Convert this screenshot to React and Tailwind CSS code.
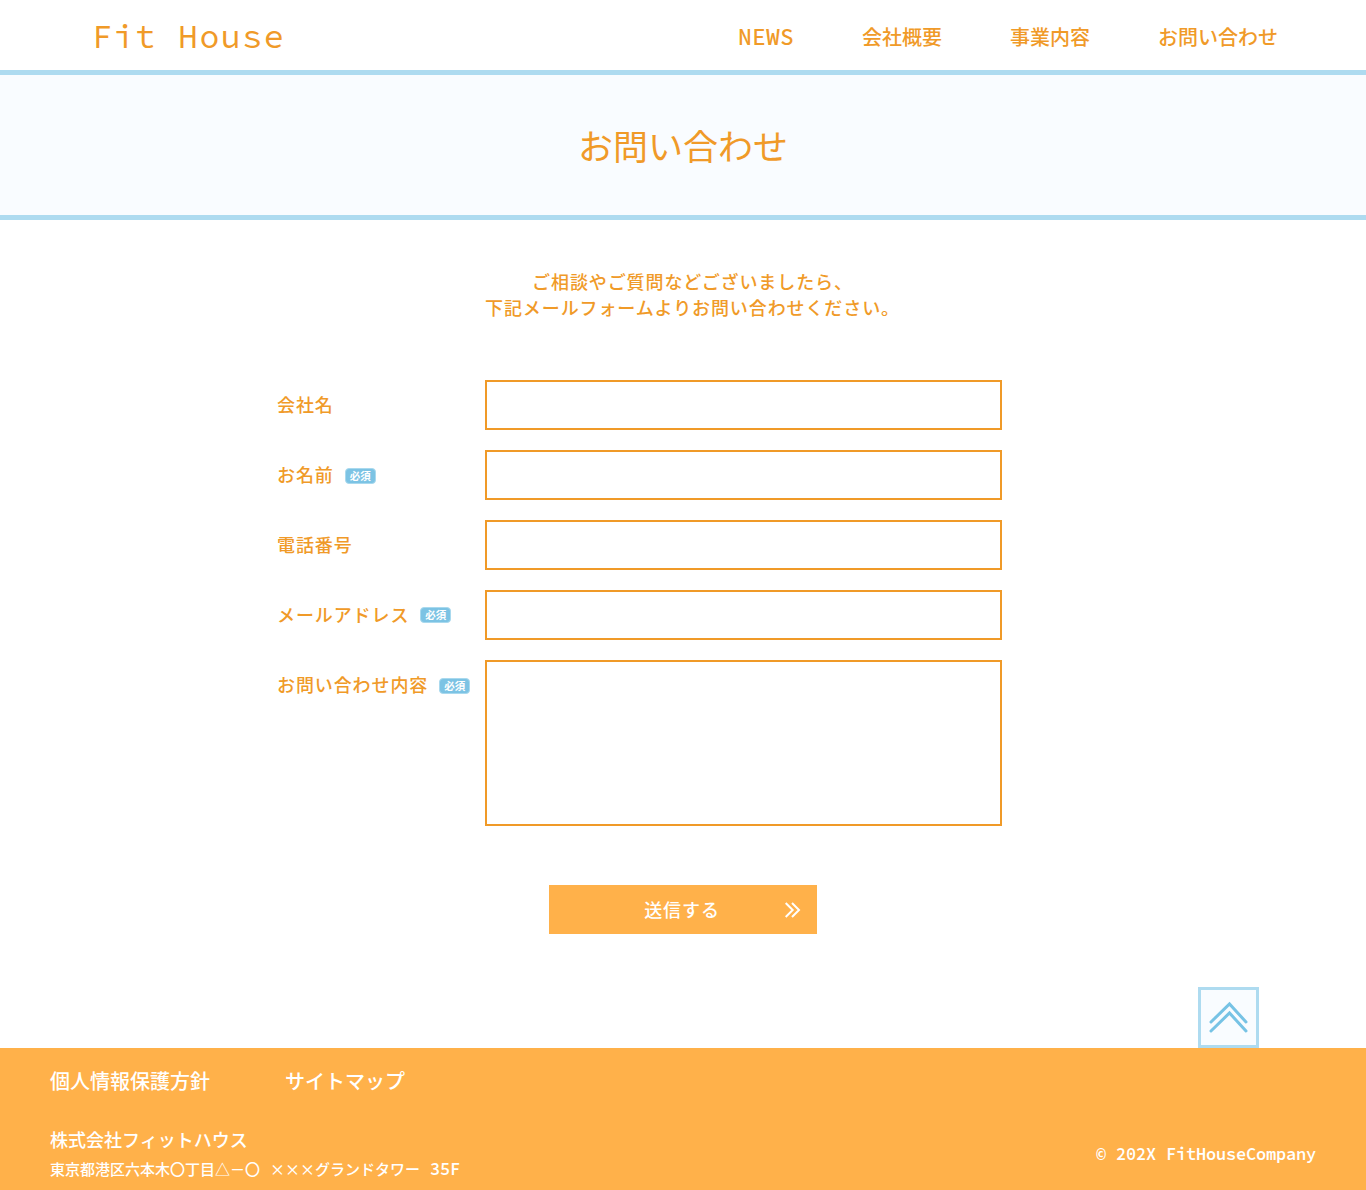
const labels = [
  { text: '会社名' },
  { text: 'お名前', required: true, badge: 'mt-[3px]' },
  { text: '電話番号' },
  { text: 'メールアドレス', required: true, badge: 'mt-px' },
  { text: 'お問い合わせ内容', required: true, badge: 'mt-[3px]', area: true },
];

function Badge({ className }) {
  return (
    <span className={`ml-[11px] flex h-4 w-[31px] items-center justify-center rounded-[4px] border border-[#a9d9ee] bg-[#7cc3e4] pt-[2px] text-[10.5px] leading-none font-bold tracking-normal text-white ${className}`}>
      必須
    </span>
  );
}

export default function App() {
  return (
    <div className="flex h-[1190px] w-full flex-col bg-white font-['Noto_Sans_CJK_JP',sans-serif] font-medium text-[#f09a28]">
      <header className="flex h-[75px] shrink-0 items-center justify-between border-b-[5px] border-[#aedbf0] pr-[88px] pl-[92px]">
        <a className="mt-[4px] font-['Source_Code_Pro','DejaVu_Sans_Mono',monospace] text-[33.3px] leading-none font-normal tracking-[1.5px] whitespace-pre">Fit House</a>
        <nav className="flex items-center gap-[68px] pt-[3px] text-[20px] leading-[30px]">
          <a className="font-['Source_Code_Pro','DejaVu_Sans_Mono',monospace] text-[23px] tracking-[0.2px]">NEWS</a>
          <a>会社概要</a>
          <a>事業内容</a>
          <a>お問い合わせ</a>
        </nav>
      </header>
      <section className="flex h-[145px] shrink-0 items-center justify-center border-b-[5px] border-[#aedbf0] bg-[#f9fcff]">
        <h1 className="pb-[2px] text-[35px] leading-none font-normal">お問い合わせ</h1>
      </section>
      <main className="flex flex-1 flex-col">
        <p className="mt-[48px] w-full pl-[19px] text-center text-[18px] leading-[26px] tracking-[0.9px]">
          ご相談やご質問などございましたら、<br />下記メールフォームよりお問い合わせください。
        </p>
        <form className="mt-[60px] ml-[277px] flex w-[725px] flex-col gap-5">
          {labels.map((f) => (
            <div key={f.text} className="flex">
              <label className="flex h-[50px] w-[208px] items-center pb-[2px] text-[18px] tracking-[0.9px] whitespace-nowrap">
                {f.text}
                {f.required && <Badge className={f.badge} />}
              </label>
              {f.area ? (
                <textarea className="h-[166px] w-[517px] resize-none border-2 border-[#f09a28] bg-white" />
              ) : (
                <input className="h-[50px] w-[517px] border-2 border-[#f09a28] bg-white" />
              )}
            </div>
          ))}
        </form>
        <button className="relative mt-[59px] ml-[549px] h-[49px] w-[268px] bg-[#ffb14a] pr-[2px] text-[18px] tracking-[0.9px] text-white">
          送信する
          <svg className="absolute top-[17px] right-4 h-4 w-4" viewBox="0 0 16 16" fill="none" stroke="currentColor" strokeWidth="2">
            <path d="M.7 1l7 7-7 7M7 1l7 7-7 7" />
          </svg>
        </button>
        <a className="mt-auto ml-[1198px] flex h-[61px] w-[61px] items-center justify-center border-[3px] border-[#aedbf0] bg-[#f9fcff]">
          <svg className="h-[55px] w-[55px]" viewBox="0 0 55 55" fill="none" stroke="#77c3e5" strokeWidth="3" strokeLinecap="round">
            <path d="M10 32L28.5 14 45 32M10 41L28.5 23 45 41" />
          </svg>
        </a>
      </main>
      <footer className="flex h-[142px] shrink-0 justify-between bg-[#ffb14a] px-[50px] text-white">
        <div>
          <nav className="mt-[18px] flex gap-[75px] text-[20px] leading-[30px]">
            <a>個人情報保護方針</a>
            <a>サイトマップ</a>
          </nav>
          <p className="mt-[30px] text-[18px] leading-[26px]">株式会社フィットハウス</p>
          <p className="mt-[5px] text-[15px] leading-[24px] whitespace-pre">
            東京都港区六本木〇丁目△－〇<span className="font-['Source_Code_Pro','DejaVu_Sans_Mono',monospace] text-[16.67px] leading-none"> </span>×××グランドタワー<span className="font-['Source_Code_Pro','DejaVu_Sans_Mono',monospace] text-[17px] leading-none font-semibold tracking-[-0.2px]"> 35F</span>
          </p>
        </div>
        <p className="mt-[94px] font-['Source_Code_Pro','DejaVu_Sans_Mono',monospace] text-[17px] leading-[24px] font-semibold tracking-[-0.2px]">© 202X FitHouseCompany</p>
      </footer>
    </div>
  );
}
